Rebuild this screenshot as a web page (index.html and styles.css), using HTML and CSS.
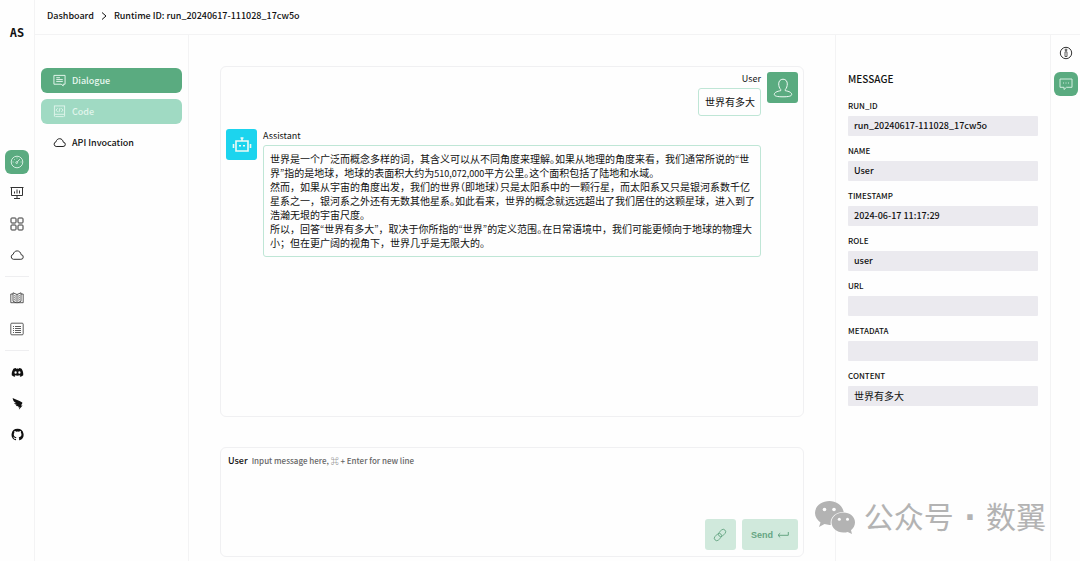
FILE: index.html
```
<!DOCTYPE html>
<html lang="zh-CN">
<head>
    <meta charset="UTF-8">
    <meta name="viewport" content="width=device-width, initial-scale=1.0">
    <title>AgentScope - Dashboard</title>
    <link rel="stylesheet" href="styles.css">
</head>
<body>
    <div class="app">
        <nav class="rail">
            <a class="logo" href="#">AS</a>
            <div class="rail-items">
                <a class="tile active" href="#" aria-label="Dashboard">
                    <svg viewBox="0 0 14 14"><circle cx="7" cy="7" r="5.8"/><path d="M7.2 7 9.8 4.2M7 2.6v.8M2.6 7h.9M10.6 7h.9M4 4l.6.6"/><circle cx="6.7" cy="7.6" r=".9"/></svg>
                </a>
                <a class="tile" href="#" aria-label="Workstation">
                    <svg viewBox="0 0 14 14"><path d="M.5 1.500h13M1.500 1.500v8h11v-8M7 9.500v3M4 12.500h6"/><path d="M4.500 5.500v2M7 3.500v4M9.500 4.500v3"/></svg>
                </a>
                <a class="tile" href="#" aria-label="Gallery">
                    <svg viewBox="0 0 14 14"><rect x="1" y="1" width="5" height="5" rx=".8"/><rect x="8" y="1" width="5" height="5" rx=".8"/><rect x="1" y="8" width="5" height="5" rx=".8"/><rect x="8" y="8" width="5" height="5" rx=".8"/></svg>
                </a>
                <a class="tile" href="#" aria-label="Server">
                    <svg viewBox="0 0 14 14"><path d="M3.400 11.300h7.400a2.300 2.300 0 0 0 .3-4.600C10.800 4.600 9.300 2.900 7.200 2.900S3.700 4.300 3.200 6.300A2.550 2.550 0 0 0 3.400 11.300z"/></svg>
                </a>
                <hr>
                <a class="tile" href="#" aria-label="Tutorial">
                    <svg class="fine" viewBox="0 0 14 14"><path d="M7 3.500 3 1.800v8.400l4 1.800 4-1.800V1.800zM7 3.500V12M3 3H.8v8.700H6M11 3h2.200v8.700H8M4.200 4.600l1.600.6M4.200 6.600l1.600.6M4.200 8.600l1.600.6M9.800 4.600l-1.600.6M9.800 6.600l-1.600.6M9.800 8.600l-1.600.6"/></svg>
                </a>
                <a class="tile" href="#" aria-label="API documents">
                    <svg class="fine" viewBox="0 0 14 14"><rect x=".8" y="1.200" width="12.400" height="11.600" rx="1"/><path d="M5 4.500h6M5 6.500h6M5 8.500h6M5 10.500h6M3 4.500h1M3 6.500h1M3 8.500h1M3 10.500h1"/></svg>
                </a>
                <hr>
                <a class="tile solid" href="#" aria-label="Discord">
                    <svg viewBox="0 0 24 24"><path fill-rule="evenodd" d="M19.500 5A18 18 0 0 0 15.200 3.700l-.6 1.200a16 16 0 0 0-5.200 0l-.6-1.200A18 18 0 0 0 4.500 5C1.800 9 1.100 13 1.400 17a18 18 0 0 0 5.500 3l1.300-2-1.500-.8.4-.4a13 13 0 0 0 9.800 0l.4.4-1.500.8 1.300 2a18 18 0 0 0 5.500-3c.4-4.600-.7-8.600-3.100-12zM8.500 14.500a2.100 2.300 0 1 1 0-4.600 2.100 2.300 0 0 1 0 4.600zm7 0a2.100 2.300 0 1 1 0-4.600 2.100 2.300 0 0 1 0 4.600z"/></svg>
                </a>
                <a class="tile solid" href="#" aria-label="DingTalk">
                    <svg viewBox="0 0 24 24"><path d="M3 2c5 2.500 12 5 17 7.500 1.200.6 1.200 1.200.7 2.300l-2.300 4h3L14.500 23.500l1.200-4.700h-2.700l.7-2.200c-2.300.6-3.800.3-4.900-1.300l2.800-.7C8.500 14.500 6.700 13 5.800 11l4 .4C5.500 9.800 3.700 7 3 2z"/></svg>
                </a>
                <a class="tile solid" href="#" aria-label="GitHub">
                    <svg viewBox="0 0 16 16"><path d="M8 .8a7.400 7.400 0 0 0-2.300 14.400c.4.1.5-.2.5-.4v-1.400c-2 .5-2.500-.9-2.500-.9-.3-.9-.8-1.100-.8-1.100-.7-.5 0-.5 0-.5.8.1 1.200.8 1.200.8.7 1.200 1.800.8 2.200.6 0-.5.3-.8.500-1-1.700-.2-3.400-.8-3.400-3.600 0-.8.3-1.500.8-2-.1-.2-.4-1 .1-2 0 0 .6-.2 2 .8a7 7 0 0 1 3.700 0c1.400-1 2-.8 2-.8.4 1 .2 1.800.1 2 .5.5.8 1.200.8 2 0 2.800-1.700 3.400-3.400 3.600.3.2.5.7.5 1.300v2.200c0 .2.100.5.5.4A7.400 7.400 0 0 0 8 .8z"/></svg>
                </a>
            </div>
        </nav>

        <div class="page">
            <header class="topbar">
                <a href="#">Dashboard</a>
                <svg class="chevron" viewBox="0 0 6 10"><path d="M1 1.500 5 5 1 8.500"/></svg>
                <span>Runtime ID: run_20240617-111028_17cw5o</span>
            </header>

            <div class="content">
                <aside class="menu">
                    <button class="menu-item selected" type="button">
                        <svg viewBox="0 0 14 14"><path d="M1 1.500h12v9.500h-2v1.800L8.800 11H1zM3.500 4h4M3.500 6h7M3.500 8h7"/></svg>
                        Dialogue
                    </button>
                    <button class="menu-item disabled" type="button" disabled>
                        <svg viewBox="0 0 14 14"><rect x="1.500" y="1" width="11" height="9"/><path d="M5 3.500 3.200 5.500 5 7.500M9 3.500l1.800 2L9 7.500M7.600 3.200 6.400 7.800M2.500 12.500h9M1.500 10v2.500M12.500 10v2.500"/></svg>
                        Code
                    </button>
                    <button class="menu-item" type="button">
                        <svg viewBox="0 0 14 14"><path d="M3.400 11.300h7.400a2.300 2.300 0 0 0 .3-4.600C10.800 4.600 9.300 2.900 7.200 2.900S3.700 4.300 3.200 6.300A2.550 2.550 0 0 0 3.400 11.300z"/></svg>
                        API Invocation
                    </button>
                </aside>

                <main class="chat">
                    <section class="dialogue">
                        <div class="message from-user">
                            <div class="message-body">
                                <div class="name">User</div>
                                <div class="bubble"><p>世界有多大</p></div>
                            </div>
                            <div class="avatar avatar-user">
                                <svg viewBox="0 0 20 20"><path d="M10 1.200c-2.700 0-4.300 2-4.300 4.700 0 2 .6 4.300 2 5.600v1.200C4 13.300 1.300 14.500 1.300 16.400c0 1.700 3 2.400 8.700 2.400s8.700-.7 8.700-2.400c0-1.900-2.700-3.100-6.400-3.700v-1.200c1.400-1.300 2-3.600 2-5.600 0-2.700-1.600-4.700-4.300-4.700z"/></svg>
                            </div>
                        </div>
                        <div class="message from-assistant">
                            <div class="avatar avatar-bot">
                                <svg viewBox="0 0 20 20"><path d="M4 6h12v10H4zM10 6V3M8.500 3h3M1.500 9v4M18.500 9v4"/><path d="M7 10.800h2M11 10.800h2"/></svg>
                            </div>
                            <div class="message-body">
                                <div class="name">Assistant</div>
                                <div class="bubble">
                                    <p>世界是一个广泛而概念多样的词，其含义可以从不同角度来理解<span class="half">。</span>如果从地理的角度来看，我们通常所说的<span class="latin">“</span>世界<span class="latin">”</span>指的是地球，地球的表面积大约为<span class="latin">510,072,000</span>平方公里<span class="half">。</span>这个面积包括了陆地和水域。</p>
                                    <p>然而，如果从宇宙的角度出发，我们的世界<span class="half">（</span>即地球<span class="half">）</span>只是太阳系中的一颗行星，而太阳系又只是银河系数千亿星系之一，银河系之外还有无数其他星系<span class="half">。</span>如此看来，世界的概念就远远超出了我们居住的这颗星球，进入到了浩瀚无垠的宇宙尺度。</p>
                                    <p>所以，回答<span class="latin">“</span>世界有多大<span class="latin">”</span>，取决于你所指的<span class="latin">“</span>世界<span class="latin">”</span>的定义范围<span class="half">。</span>在日常语境中，我们可能更倾向于地球的物理大小；但在更广阔的视角下，世界几乎是无限大的。</p>
                                </div>
                            </div>
                        </div>
                    </section>

                    <form class="composer">
                        <div class="composer-row">
                            <label for="message">User</label>
                            <textarea id="message" placeholder="Input message here, ⌘ + Enter for new line"></textarea>
                        </div>
                        <div class="composer-actions">
                            <button class="attach" type="button" aria-label="Attach link" disabled>
                                <svg viewBox="0 0 16 16"><g transform="rotate(-45 8 8)"><rect x="0" y="5.200" width="9.500" height="5.600" rx="2.800"/><rect x="6.500" y="5.200" width="9.500" height="5.600" rx="2.800"/></g></svg>
                            </button>
                            <button class="send" type="submit" disabled>
                                Send
                                <svg viewBox="0 0 12 8"><path d="M11.300 1v3.300H1M3.200 2.200 1 4.300l2.200 2.100"/></svg>
                            </button>
                        </div>
                    </form>
                </main>

                <aside class="details">
                    <h2>MESSAGE</h2>
                    <dl>
                        <dt>RUN_ID</dt>
                        <dd>run_20240617-111028_17cw5o</dd>
                        <dt>NAME</dt>
                        <dd>User</dd>
                        <dt>TIMESTAMP</dt>
                        <dd>2024-06-17 11:17:29</dd>
                        <dt>ROLE</dt>
                        <dd>user</dd>
                        <dt>URL</dt>
                        <dd></dd>
                        <dt>METADATA</dt>
                        <dd></dd>
                        <dt>CONTENT</dt>
                        <dd class="cjk">世界有多大</dd>
                    </dl>
                </aside>

                <aside class="tabs">
                    <button class="tile" type="button" aria-label="Run info">
                        <svg viewBox="0 0 14 14"><circle cx="7" cy="7" r="5.700"/><path class="fine" d="M6 5.800h2v4.700H6zM6.200 3.200h1.600v1.300H6.200z"/></svg>
                    </button>
                    <button class="tile active" type="button" aria-label="Message info">
                        <svg viewBox="0 0 14 14"><path d="M1 2h12v8.300H7.500L5 12.500v-2.200H1z"/><path d="M4 6h1M6.500 6h1M9 6h1"/></svg>
                    </button>
                </aside>
            </div>
        </div>

        <div class="watermark">
            <svg viewBox="0 0 42 34"><path d="M15.500 1C7.500 1 1 6.200 1 13c0 4 2.200 7.200 5.500 9.400L5 27l5.500-2.900c1.600.5 3.300.8 5 .8h1.300C15.500 17.500 21.500 12 29.700 12 28.500 5.500 22.500 1 15.500 1z"/><path d="M41 22.300C41 16.700 35.800 12.500 29.500 12.500S17.500 16.700 17.500 22.300s5.200 10.200 12 10.200c1.500 0 2.900-.2 4.200-.6l4.300 2-1-3.700c2.500-1.800 4-4.600 4-7.900z"/><g class="eyes"><circle cx="10.500" cy="9.500" r="1.800"/><circle cx="20" cy="9.500" r="1.800"/><circle cx="25.300" cy="19.300" r="1.500"/><circle cx="33.500" cy="19.300" r="1.500"/></g></svg>
            <span>公众号<span class="dot"> · </span>数翼</span>
        </div>
    </div>
</body>
</html>
```

FILE: styles.css
```
* {
    box-sizing: border-box;
}

body {
    margin: 0;
    background-color: #fefefe;
    color: #111;
    font-family: "Noto Sans CJK SC", sans-serif;
    font-size: 9px;
    font-weight: 400;
    line-height: 14px;
}

a {
    color: inherit;
    text-decoration: none;
}

button, textarea {
    font: inherit;
    color: inherit;
    border: none;
    background: none;
    padding: 0;
}

svg {
    display: block;
    width: 14px;
    height: 14px;
    flex: none;
    fill: none;
    stroke: currentColor;
    stroke-width: 1;
}

.fine {
    stroke-width: 0.8;
}

.app {
    display: flex;
    min-height: 100vh;
}

.rail {
    display: flex;
    flex-direction: column;
    align-items: center;
    width: 35px;
    padding: 24px 0 7px;
    border-right: 1px solid #f3f3f4;
}

.logo {
    height: 18px;
    font-family: "DejaVu Sans Mono", monospace;
    font-size: 12px;
    font-weight: 700;
    line-height: 18px;
}

.rail-items {
    flex: 1;
    display: flex;
    flex-direction: column;
    align-items: center;
    justify-content: center;
    gap: 7px;
}

.rail-items hr {
    width: 24px;
    height: 1px;
    margin: 2px 0;
    border: none;
    background-color: #eeeef0;
}

.tile {
    display: flex;
    align-items: center;
    justify-content: center;
    width: 24px;
    height: 24px;
    border-radius: 6px;
    color: #333;
}

.tile.active {
    background-color: #5aab80;
    color: #d3eddf;
}

.tile.solid svg {
    width: 13px;
    height: 13px;
    fill: #111;
    stroke: none;
}

.page {
    flex: 1;
    display: flex;
    flex-direction: column;
    min-width: 0;
}

.topbar {
    display: flex;
    align-items: center;
    gap: 7px;
    height: 35px;
    padding: 0 12px 3px;
    border-bottom: 1px solid #f3f3f4;
    font-weight: 500;
}

.chevron {
    width: 6px;
    height: 10px;
}

.content {
    flex: 1;
    display: flex;
}

.menu {
    display: flex;
    flex-direction: column;
    gap: 6px;
    width: 154px;
    padding: 33px 6px;
    border-right: 1px solid #f3f3f4;
    font-weight: 500;
}

.menu-item {
    display: flex;
    align-items: center;
    gap: 6px;
    height: 25px;
    padding: 0 12px;
    border-radius: 6px;
}

.menu-item svg {
    width: 13px;
    height: 13px;
}

.menu-item.selected {
    background-color: #5aab80;
    color: #e9f8f0;
}

.menu-item.disabled {
    background-color: #a0dac3;
    color: #e0f5ec;
}

.chat {
    flex: 1;
    display: flex;
    flex-direction: column;
    gap: 30px;
    min-width: 0;
    padding: 31px 31px 4px;
}

.dialogue {
    flex: 1;
    display: flex;
    flex-direction: column;
    gap: 13px;
    padding: 5px;
    border: 1px solid #f0f0f2;
    border-radius: 6px;
}

.message {
    display: flex;
    gap: 6px;
}

.from-user {
    justify-content: flex-end;
}

.from-assistant {
    padding-right: 37px;
}

.message-body {
    display: flex;
    flex-direction: column;
    gap: 2px;
}

.from-user .name {
    text-align: right;
}

.bubble {
    padding: 6px 5px 6px 6px;
    border: 1px solid #bfe6d6;
    border-radius: 3px;
    font-size: 10px;
}

.bubble p {
    margin: 0;
}

.latin {
    font-size: 9px;
    line-height: 1;
    font-feature-settings: "pwid";
}

/* half-width punctuation */
.half {
    font-feature-settings: "halt";
}

.avatar {
    display: flex;
    align-items: center;
    justify-content: center;
    flex: none;
    width: 31px;
    height: 31px;
    border-radius: 3px;
    color: #f0faf5;
}

.avatar svg {
    width: 20px;
    height: 20px;
}

.avatar-user {
    background-color: #5aab80;
}

.avatar-bot {
    background-color: #1cd4ee;
}

.avatar-bot svg {
    stroke-width: 1.6;
}

.composer {
    display: flex;
    flex-direction: column;
    height: 110px;
    padding: 6px 5px;
    border: 1px solid #f0f0f2;
    border-radius: 6px;
}

.composer-row {
    flex: 1;
    display: flex;
    gap: 4px;
    padding-left: 2px;
}

.composer-row label {
    font-weight: 500;
}

.composer-row textarea {
    flex: 1;
    resize: none;
    outline: none;
    font-size: 8px;
}

.composer-row textarea::placeholder {
    color: #666;
    font-weight: 500;
}

.composer-actions {
    display: flex;
    justify-content: flex-end;
    gap: 6px;
}

.composer-actions button {
    display: flex;
    align-items: center;
    justify-content: center;
    gap: 4px;
    height: 31px;
    border-radius: 3px;
    background-color: #d0e9dc;
    color: #66a583;
}

.composer-actions .attach {
    width: 31px;
}

.composer-actions .send {
    padding: 0 9px;
    font-family: "Liberation Sans", Arial, sans-serif;
    font-weight: 700;
}

.send svg {
    width: 12px;
    height: 8px;
}

.details {
    width: 216px;
    padding: 37px 12px 12px;
    border-left: 1px solid #f3f3f4;
    border-right: 1px solid #f3f3f4;
}

.details h2 {
    margin: 0 0 13px;
    font-size: 10px;
    font-weight: 500;
}

.details dl {
    margin: 0;
}

.details dt {
    margin-bottom: 3px;
    font-size: 8px;
    font-weight: 500;
}

.details dd {
    height: 20px;
    margin: 0 0 8px;
    padding: 0 6px;
    border-radius: 1px;
    background-color: #ebeaef;
    font-weight: 500;
    line-height: 20px;
}

.details .cjk {
    font-size: 10px;
    font-weight: 400;
}

.tabs {
    display: flex;
    flex-direction: column;
    align-items: center;
    gap: 7px;
    width: 29px;
    padding-top: 6px;
}

/* Account mark, floats over the page corner */
.watermark {
    position: absolute;
    right: 34px;
    bottom: 24px;
    display: flex;
    align-items: center;
    gap: 8px;
    color: #b3b3b3;
    font-size: 30px;
    font-weight: 400;
    line-height: 38px;
}

.watermark .dot {
    font-family: "DejaVu Sans", sans-serif;
    font-weight: 700;
}

.watermark svg {
    width: 42px;
    height: 34px;
    fill: currentColor;
    stroke: none;
}

.watermark .eyes {
    fill: #fefefe;
}
```
